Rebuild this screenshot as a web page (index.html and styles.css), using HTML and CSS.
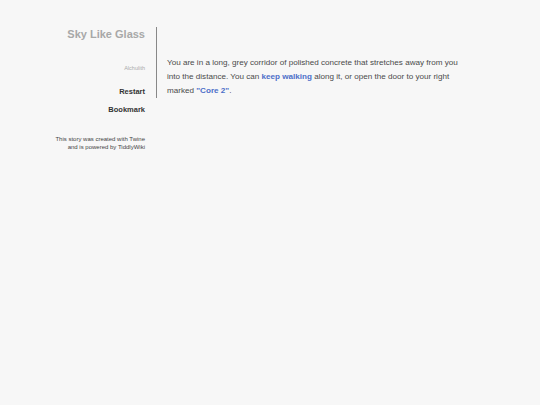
FILE: index.html
```html
<!DOCTYPE html>
<html>
<head>
<meta charset="utf-8">
<link rel="stylesheet" href="styles.css">
</head>
<body>
<div class="story">
  <div class="sidebar">
    <div class="title">Sky Like Glass</div>
    <div class="author">Alchulith</div>
    <div class="menu">
      <div class="menu-item">Restart</div>
      <div class="menu-item">Bookmark</div>
    </div>
    <div class="credits">This story was created with Twine<br>and is powered by TiddlyWiki</div>
  </div>
  <div class="passage">
    <p>You are in a long, grey corridor of polished concrete that stretches away from you into the distance. You can <span class="link">keep walking</span> along it, or open the door to your right marked <span class="link">"Core 2"</span>.</p>
  </div>
</div>
</body>
</html>
```
FILE: styles.css
```css
html, body {
  margin: 0;
  padding: 0;
  background: #f7f7f7;
  font-family: "Liberation Sans", Arial, sans-serif;
  width: 540px;
  height: 405px;
  overflow: hidden;
}
.story {
  display: flex;
  align-items: flex-start;
  padding-top: 27px;
}
.sidebar {
  width: 145px;
  text-align: right;
  margin-right: 11px;
  display: flex;
  flex-direction: column;
}
.title {
  font-size: 11px;
  font-weight: bold;
  line-height: 14px;
  color: #a8a8a8;
}
.author {
  font-size: 5.5px;
  line-height: 8px;
  color: #aaa;
  margin-top: 23px;
}
.menu {
  margin-top: 15px;
  display: flex;
  flex-direction: column;
  gap: 8px;
}
.menu-item {
  font-size: 7.5px;
  font-weight: bold;
  line-height: 10px;
  color: #333;
}
.credits {
  margin-top: 20px;
  font-size: 6px;
  line-height: 8px;
  color: #444;
}
.passage {
  border-left: 1px solid #888;
  padding: 29px 0 0 10px;
  width: 300px;
}
.passage p {
  margin: 0;
  font-size: 8.1px;
  line-height: 14px;
  color: #4a4a4a;
}
.link {
  color: #4d6fc9;
  font-weight: bold;
}
```
